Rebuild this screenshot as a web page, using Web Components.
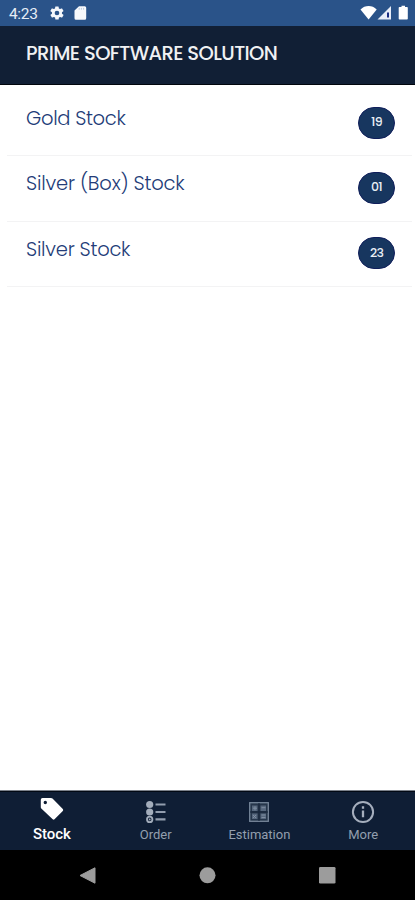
<!DOCTYPE html>
<html lang="en">
<head>
<meta charset="utf-8">
<title>Stock</title>
<style>
html,body{margin:0;height:100%;background:#fff}
body{overflow:hidden}
</style>
</head>
<body>
<stock-app></stock-app>
<script>
const define = (name, html) => {
  const t = document.createElement('template');
  t.innerHTML = html;
  customElements.define(name, class extends HTMLElement {
    constructor() {
      super();
      this.attachShadow({ mode: 'open' }).append(t.content.cloneNode(true));
    }
  });
};

define('status-bar', `
<style>
:host{display:flex;align-items:center;height:26px;background:#2a5389;color:#e6edf6;box-sizing:border-box;padding:0 7px 0 9px;font:15.5px/26px Roboto,sans-serif}
span{width:40px;letter-spacing:-.35px;padding-top:2px}
svg{display:block;flex:none}
.gap{flex:1}
</style>
<span>4:23</span>
<svg width="16" height="16" viewBox="0 0 24 24" fill="#f4f7fb" fill-rule="evenodd"><path d="M19.4 13c0-.3.1-.7.1-1s0-.7-.1-1l2.1-1.600a.5.5 0 0 0 .1-.6l-2-3.500a.5.5 0 0 0-.6-.2l-2.500 1a7 7 0 0 0-1.700-1l-.4-2.600a.5.5 0 0 0-.5-.4h-4a.5.5 0 0 0-.5.4L9 5.100a7 7 0 0 0-1.700 1l-2.500-1a.5.5 0 0 0-.6.2l-2 3.500a.5.5 0 0 0 .1.6L4.500 11a8 8 0 0 0 0 2l-2.100 1.600a.5.5 0 0 0-.1.6l2 3.500c.1.2.4.3.6.2l2.500-1a7 7 0 0 0 1.700 1l.4 2.600c0 .3.2.4.5.4h4c.3 0 .5-.2.5-.4l.4-2.600a7 7 0 0 0 1.700-1l2.500 1c.2.1.5 0 .6-.2l2-3.500a.5.5 0 0 0-.1-.6zM12 15.500a3.500 3.500 0 1 1 0-7 3.500 3.500 0 0 1 0 7z"/></svg>
<svg style="margin-left:9px" width="13" height="14" viewBox="0 0 13 14"><path d="M5 .3h5.700a1.500 1.500 0 0 1 1.500 1.500v10.500a1.500 1.500 0 0 1-1.500 1.500H2A1.500 1.500 0 0 1 .5 12.300V4.600z" fill="#f7f9fc"/><path d="M5.200 1.900v1.800M7.400 1.900v1.800M9.600 1.900v1.800" stroke="#bccbe0" stroke-width="1"/></svg>
<div class="gap"></div>
<svg width="48" height="16" viewBox="0 0 48 16"><path d="M.5 4.500C5-.1 12.200-.1 16.700 4.500L8.600 14.500z" fill="#fff"/><path d="M31 1v13.600H17.500z" fill="#e8edf8"/><path d="M28 7.500v5" stroke="#182b82" stroke-width="2"/><path d="M39.500 2h2V.8h3.500V2h2c.5 0 .8.3.8.8v11c0 .5-.3.8-.8.800h-7.500c-.5 0-.8-.3-.8-.8v-11c0-.5.3-.8.8-.8z" fill="#fff"/></svg>
`);

define('app-header', `
<style>
:host{display:block;height:58.500px;box-sizing:border-box;background:#111f35;border-bottom:1.500px solid #02060d;color:#f0f1f3;padding:14px 0 0 26px;font:500 19.500px/28px Poppins,Inter,sans-serif;letter-spacing:-.6px;white-space:nowrap}
</style><slot></slot>`);

define('count-badge', `
<style>
:host{display:flex;align-items:center;justify-content:center;width:37px;height:32px;box-sizing:border-box;border:1px solid #101e5b;border-radius:16px;background:#17365f;color:#e9eef5;font:500 12.500px/1 Poppins,Inter,sans-serif;letter-spacing:-.7px;padding-bottom:1px}
</style><slot></slot>`);

define('stock-row', `
<style>
:host{display:flex;justify-content:space-between;align-items:flex-start;height:65.300px;box-sizing:border-box;margin:0 3px 0 7px;padding:14px 17px 0 19px;border-bottom:1px solid #f3f3f4;color:#233c78;font:300 19.500px/28px Poppins,Inter,sans-serif;white-space:nowrap}
.t{letter-spacing:var(--track,-.25px)}
.b{padding-top:1.500px}
</style><div class="t"><slot></slot></div><div class="b"><slot name="count"></slot></div>`);

define('tab-item', `
<style>
:host{display:flex;flex-direction:column;align-items:center;flex:1;color:#939eae;font:400 13px/16px Roboto,sans-serif}
:host([active]){color:#fff;font-size:15px;font-weight:500}
.i{height:26px;margin:7.500px 0 2.500px;display:flex;align-items:center}
:host([active]) .i{margin:5px 0 4px}
.l{letter-spacing:var(--track,0)}
</style><div class="i"><slot name="icon"></slot></div><div class="l"><slot></slot></div>`);

define('tab-bar', `
<style>
:host{display:flex;height:60px;box-sizing:border-box;background:#0f1e35;border-top:1px solid #7c828b;box-shadow:inset 0 1px #020914}
</style><slot></slot>`);

define('system-nav', `
<style>
:host{display:flex;justify-content:space-between;height:50px;box-sizing:border-box;background:#000;padding:17px 79px 0}
svg{display:block}
</style>
<svg width="17" height="17"><path d="M1 8.500 16 .8v15.400z" fill="#9c9c9c" stroke="#9c9c9c" stroke-linejoin="round"/></svg>
<svg width="17" height="17"><circle cx="8.500" cy="8.300" r="8" fill="#9c9c9c"/></svg>
<svg width="17" height="17"><rect width="16.500" height="16.500" rx="1.300" fill="#9c9c9c"/></svg>`);

define('stock-app', `
<style>
:host{display:flex;flex-direction:column;height:900px;width:415px;background:#fff}
main{flex:1;padding-top:6.700px;box-sizing:border-box}
svg{display:block}
</style>
<status-bar></status-bar>
<app-header>PRIME SOFTWARE SOLUTION</app-header>
<main>
<stock-row style="--track:-.32px">Gold Stock<count-badge slot="count">19</count-badge></stock-row>
<stock-row style="--track:-.2px">Silver (Box) Stock<count-badge slot="count">01</count-badge></stock-row>
<stock-row>Silver Stock<count-badge slot="count">23</count-badge></stock-row>
</main>
<tab-bar>
<tab-item active style="--track:-.1px"><svg slot="icon" width="24" height="24" viewBox="0 0 24 24"><path fill="#fff" fill-rule="evenodd" d="M2.500 1H11q.9 0 1.500.6l10.300 10.500q.9.900 0 1.800l-8.300 8.300q-.9.900-1.800 0L1.300 11.500Q.8 11 .8 10.200V2.700Q.8 1 2.500 1zM5.300 3.800a1.700 1.700 0 1 0 0 3.400 1.700 1.700 0 0 0 0-3.400z"/></svg>Stock</tab-item>
<tab-item><svg slot="icon" width="21" height="24" viewBox="0 0 21 24"><g fill="#a3adbb"><circle cx="4.700" cy="4.500" r="3.600"/><circle cx="4.700" cy="12" r="3.600"/></g><circle cx="4.700" cy="19.400" r="2.700" fill="none" stroke="#a3adbb" stroke-width="1.800"/><circle cx="4.700" cy="19.400" r=".9" fill="#a3adbb"/><path d="M10.500 4.500h10M10.500 12h10M10.500 19.400h10" stroke="#929dae" stroke-width="2.200"/></svg>Order</tab-item>
<tab-item><svg slot="icon" width="20" height="20" viewBox="0 0 20 20"><rect x=".7" y=".7" width="18.600" height="18.600" fill="#26364b" stroke="#76869a" stroke-width="1.300"/><g fill="#56677d"><rect x="3" y="3.500" width="5.500" height="5.500"/><rect x="11.500" y="3.500" width="5.500" height="5.500"/><rect x="3" y="11.500" width="5.500" height="5.500"/><rect x="11.500" y="11.500" width="5.500" height="5.500"/></g><path d="M10 1v18M1 10h18" stroke="#142338" stroke-width="1"/><path d="M4 6.200h4M6 4.300v4M12.500 5.700h4M4 13l3 3m0-3-3 3M12.500 13h4M12.500 15.500h4" stroke="#8291a4" stroke-width=".9"/></svg>Estimation</tab-item>
<tab-item><svg slot="icon" width="24" height="24" viewBox="0 0 24 24"><circle cx="12" cy="12" r="10.100" fill="none" stroke="#a5aebd" stroke-width="2"/><path d="M12 6.300v2.400M12 10.500v6.800" stroke="#a5aebd" stroke-width="2.300"/></svg>More</tab-item>
</tab-bar>
<system-nav></system-nav>
`);
</script>
</body>
</html>
